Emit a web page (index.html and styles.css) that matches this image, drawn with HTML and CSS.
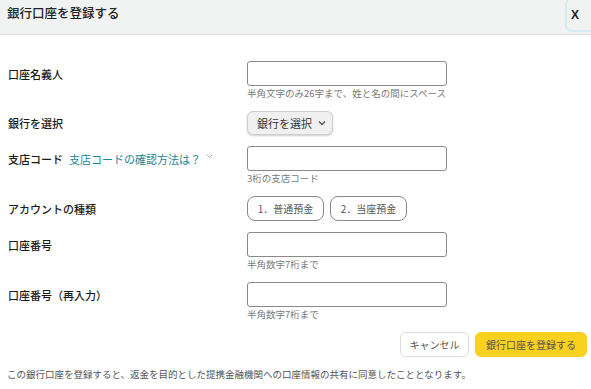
FILE: index.html
```html
<!DOCTYPE html>
<html lang="ja">
<head>
    <meta charset="UTF-8">
    <meta name="viewport" content="width=device-width, initial-scale=1.0">
    <title>銀行口座を登録する</title>
    <link rel="stylesheet" href="styles.css">
</head>
<body>
    <div class="modal-header">
        <div class="modal-title">銀行口座を登録する</div>
        <button class="close-btn">X</button>
    </div>

    <div class="modal-body">
        <div class="form-row">
            <div class="form-label">口座名義人</div>
            <div class="form-field">
                <input type="text" class="text-input">
                <div class="hint">半角文字のみ26字まで、姓と名の間にスペース</div>
            </div>
        </div>

        <div class="form-row">
            <div class="form-label short">銀行を選択</div>
            <div class="form-field">
                <button class="select-btn">銀行を選択
                    <svg width="8" height="6" viewBox="0 0 8 6"><path d="M1 1.5 L4 4.5 L7 1.5" fill="none" stroke="#555" stroke-width="1.4"/></svg>
                </button>
            </div>
        </div>

        <div class="form-row">
            <div class="form-label">支店コード
                <a href="#" class="help-link">支店コードの確認方法は？</a>
                <svg class="help-chevron" width="7" height="5" viewBox="0 0 7 5"><path d="M1 1 L3.5 3.5 L6 1" fill="none" stroke="#aaa" stroke-width="1"/></svg>
            </div>
            <div class="form-field">
                <input type="text" class="text-input">
                <div class="hint">3桁の支店コード</div>
            </div>
        </div>

        <div class="form-row">
            <div class="form-label">アカウントの種類</div>
            <div class="form-field choice-group">
                <button class="choice-btn">1．普通預金</button>
                <button class="choice-btn">2．当座預金</button>
            </div>
        </div>

        <div class="form-row">
            <div class="form-label">口座番号</div>
            <div class="form-field">
                <input type="text" class="text-input">
                <div class="hint">半角数字7桁まで</div>
            </div>
        </div>

        <div class="form-row">
            <div class="form-label">口座番号（再入力）</div>
            <div class="form-field">
                <input type="text" class="text-input">
                <div class="hint">半角数字7桁まで</div>
            </div>
        </div>

        <div class="actions">
            <button class="btn btn-cancel">キャンセル</button>
            <button class="btn btn-submit">銀行口座を登録する</button>
        </div>

        <p class="note">この銀行口座を登録すると、返金を目的とした提携金融機関への口座情報の共有に同意したこととなります。</p>
    </div>
</body>
</html>
```

FILE: styles.css
```css
* {
    margin: 0;
    padding: 0;
    box-sizing: border-box;
    font-family: "Noto Sans CJK JP", "Liberation Sans", sans-serif;
}

body {
    background-color: #fff;
    color: #222;
}

.modal-header {
    display: flex;
    justify-content: space-between;
    align-items: center;
    height: 35px;
    padding-left: 7px;
    background-color: #f1f2f2;
    border-bottom: 1px solid #dcdddd;
    overflow: hidden;
}

.modal-title {
    font-size: 12.5px;
    font-weight: 500;
    color: #222;
    margin-top: -10px;
}

.close-btn {
    width: 34px;
    height: 34px;
    margin-top: -4px;
    margin-right: -8px;
    padding-right: 14px;
    border: 2px solid #d3edf5;
    border-radius: 6px;
    background-color: #f1f2f2;
    font-family: "Liberation Sans", sans-serif;
    font-size: 12px;
    font-weight: bold;
    color: #222;
}

.modal-body {
    padding: 26px 4px 0 8px;
}

.form-row {
    display: flex;
    margin-bottom: 11px;
}

.form-label {
    width: 239px;
    height: 25px;
    display: flex;
    align-items: center;
    font-size: 11px;
    font-weight: 500;
    color: #1a1a1a;
}

.form-label.short {
    height: 24px;
}

.help-link {
    margin-left: 6px;
    color: #1b8796;
    font-weight: normal;
    text-decoration: none;
}

.help-chevron {
    margin-left: 5px;
    margin-top: -4px;
}

.text-input {
    display: block;
    width: 200px;
    height: 25px;
    border: 1px solid #8a8a8a;
    border-radius: 3px;
}

.hint {
    font-size: 9.5px;
    line-height: 14px;
    color: #7a7a7a;
}

.select-btn {
    display: flex;
    align-items: center;
    gap: 6px;
    height: 24px;
    width: 86px;
    padding-left: 9px;
    background-color: #f0f0f0;
    border: 1px solid #cfcfcf;
    border-radius: 6px;
    box-shadow: 0 1px 2px rgba(0, 0, 0, 0.2);
    font-size: 11px;
    color: #333;
}

.choice-group {
    display: flex;
    gap: 6px;
}

.choice-btn {
    height: 25px;
    width: 77px;
    background-color: #fff;
    border: 1px solid #8a8a8a;
    border-radius: 8px;
    font-size: 10px;
    color: #555;
}

.actions {
    display: flex;
    justify-content: flex-end;
    gap: 6px;
    margin-bottom: 10px;
}

.btn {
    height: 25px;
    border-radius: 6px;
    font-size: 10px;
    color: #555;
}

.btn-cancel {
    width: 69px;
    background-color: #fff;
    border: 1px solid #dcdcdc;
}

.btn-submit {
    width: 112px;
    background-color: #fad11e;
    border: 1px solid #fad11e;
}

.note {
    font-size: 9.5px;
    line-height: 14px;
    color: #555;
    margin-left: -1px;
}
```
